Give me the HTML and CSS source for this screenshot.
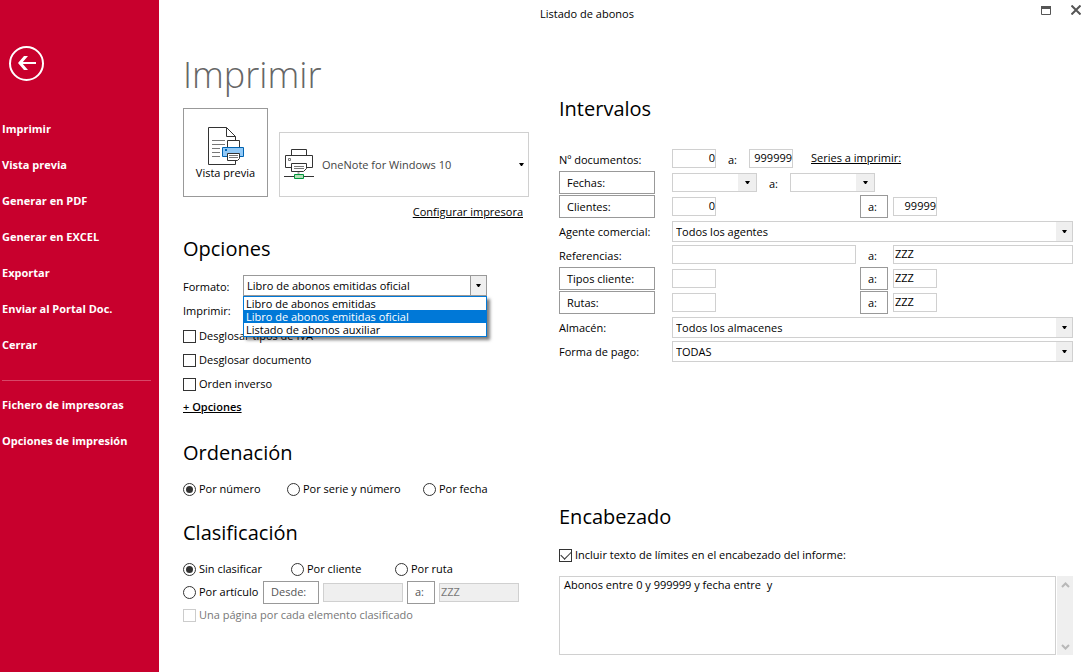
FILE: index.html
```html
<!DOCTYPE html>
<html lang="es">
<head>
<meta charset="utf-8">
<title>Listado de abonos</title>
<link rel="stylesheet" href="styles.css">
</head>
<body>
<aside class="sidebar">
  <button class="back" aria-label="Volver">
    <svg width="35" height="35" viewBox="0 0 35 35" fill="none" stroke="#fff"><circle cx="17.500" cy="17.500" r="16.500" stroke-width="2"/><path d="M11 17H27" stroke-width="2"/><path d="M9 17L15 10H19L13 17L19 24H15Z" fill="#fff" stroke="none"/></svg>
  </button>
  <nav class="menu">
    <a href="#">Imprimir</a>
    <a href="#">Vista previa</a>
    <a href="#">Generar en PDF</a>
    <a href="#">Generar en EXCEL</a>
    <a href="#">Exportar</a>
    <a href="#">Enviar al Portal Doc.</a>
    <a href="#">Cerrar</a>
    <hr>
    <a href="#">Fichero de impresoras</a>
    <a href="#">Opciones de impresión</a>
  </nav>
</aside>
<div class="window">
  <header class="titlebar">
    <span class="caption">Listado de abonos</span>
    <div class="window-buttons">
      <button aria-label="Maximizar"><svg width="10" height="10" viewBox="0 0 10 10"><path d="M.5 1.500H9.500V9.500H.5Z" fill="none" stroke="#555"/><path d="M0 1H10V4H0Z" fill="#555"/></svg></button>
      <button aria-label="Cerrar ventana"><svg width="10" height="10" viewBox="0 0 10 10"><path d="M.5 .5L9.500 9.500M9.500 .5L.5 9.500" stroke="#555" stroke-width="2"/></svg></button>
    </div>
  </header>
  <main class="content">
    <div class="left">
      <h1>Imprimir</h1>
      <div class="printer-row">
        <button class="preview">
          <svg width="36" height="39" viewBox="1 0 36 39" fill="none" stroke="#333">
            <path d="M19.500 .5H1.500V37.500H28.500V33M28.500 13V9.500L19.500 .5V9.500H28.500"/>
            <path d="M5 13.500H18M5 17.500H18M5 21.500H13M5 25.500H13M5 29.500H13" stroke="#777"/>
            <path d="M20.500 20V13.500H32.500V20" fill="#fff"/>
            <path d="M15.500 20.500H36.500V29.500H15.500Z" fill="#91c9f7" stroke="#0063b1"/>
            <path d="M18 22H20V24H18Z" fill="#0063b1" stroke="none"/>
            <path d="M20.500 26.500H32.500V31.500L30.500 33.500H20.500Z" fill="#fff"/>
            <path d="M22 28.500H31M22 30.500H31" stroke="#777"/>
          </svg>
          <span>Vista previa</span>
        </button>
        <div class="printer">
          <select aria-label="Impresora"><option>OneNote for Windows 10</option></select>
          <svg class="printer-icon" width="30" height="30" viewBox="0 0 30 30" fill="none" stroke="#333">
            <path d="M7.500 6V.5H22.500V6M7 18.500H1.500V6.500H28.500V18.500H23"/>
            <path d="M4.500 9.500H6.500V11.500H4.500Z" stroke="#777"/>
            <path d="M7.500 14.500H22.500V19.500L19.500 22.500H7.500Z" fill="#fff"/>
            <path d="M10 17.500H20M10 19.500H20" stroke="#777"/>
            <path d="M14.500 23V25" stroke="#aaa" stroke-width="2"/>
            <path d="M0 27.500H30"/>
            <path d="M10.500 25.500H19.500V29.500H10.500Z" fill="#b3e0b8" stroke="#00963c"/>
          </svg>
          <svg class="arrow" width="5" height="3" viewBox="0 0 5 3"><path d="M0 0H5L3 3H2Z"/></svg>
        </div>
      </div>
      <a class="configure" href="#">Configurar impresora</a>

      <section>
        <h2>Opciones</h2>
        <div class="option-row">
          <label for="formato">Formato:</label>
          <div class="combo format">
            <select id="formato"><option>Libro de abonos emitidas oficial</option></select>
            <span class="drop"><svg width="5" height="3" viewBox="0 0 5 3"><path d="M0 0H5L3 3H2Z"/></svg></span>
            <ul class="options" role="listbox" aria-label="Formato">
              <li role="option">Libro de abonos emitidas</li>
              <li role="option" class="selected" aria-selected="true">Libro de abonos emitidas oficial</li>
              <li role="option">Listado de abonos auxiliar</li>
            </ul>
          </div>
        </div>
        <div class="option-row"><span>Imprimir:</span></div>
        <div class="checks">
          <label class="check"><input type="checkbox">Desglosar tipos de IVA</label>
          <label class="check"><input type="checkbox">Desglosar documento</label>
          <label class="check"><input type="checkbox">Orden inverso</label>
        </div>
        <a class="more" href="#">+ Opciones</a>
      </section>

      <section class="ordering">
        <h2>Ordenación</h2>
        <div class="radios order">
          <label class="check"><input type="radio" name="orden" checked>Por número</label>
          <label class="check"><input type="radio" name="orden">Por serie y número</label>
          <label class="check"><input type="radio" name="orden">Por fecha</label>
        </div>
      </section>

      <section class="classing">
        <h2>Clasificación</h2>
        <div class="radios class">
          <label class="check"><input type="radio" name="clase" checked>Sin clasificar</label>
          <label class="check"><input type="radio" name="clase">Por cliente</label>
          <label class="check"><input type="radio" name="clase">Por ruta</label>
        </div>
        <div class="article">
          <label class="check"><input type="radio" name="clase">Por artículo</label>
          <button class="box from" disabled>Desde:</button>
          <input class="field" type="text" aria-label="Artículo desde" disabled>
          <button class="box to" disabled>a:</button>
          <input class="field" type="text" aria-label="Artículo hasta" value="ZZZ" disabled>
        </div>
        <label class="check off"><input type="checkbox" disabled>Una página por cada elemento clasificado</label>
      </section>
    </div>

    <div class="right">
      <section>
        <h2>Intervalos</h2>
        <div class="ranges">
          <label for="doc1">Nº documentos:</label>
          <div class="inline docs">
            <input class="field num" id="doc1" type="text" value="0">
            <label for="doc2">a:</label>
            <input class="field num" id="doc2" type="text" value="999999">
            <a href="#">Series a imprimir:</a>
          </div>

          <button class="box">Fechas:</button>
          <div class="inline dates">
            <div class="combo date"><select aria-label="Fecha desde"><option></option></select><span class="drop"><svg width="5" height="3" viewBox="0 0 5 3"><path d="M0 0H5L3 3H2Z"/></svg></span></div>
            <label for="fecha2">a:</label>
            <div class="combo date"><select id="fecha2"><option></option></select><span class="drop"><svg width="5" height="3" viewBox="0 0 5 3"><path d="M0 0H5L3 3H2Z"/></svg></span></div>
          </div>

          <button class="box">Clientes:</button>
          <div class="span">
            <input class="field num" type="text" aria-label="Cliente desde" value="0">
            <button class="box to">a:</button>
            <input class="field num" type="text" aria-label="Cliente hasta" value="99999">
          </div>

          <label for="agente">Agente comercial:</label>
          <div class="combo"><select id="agente"><option>Todos los agentes</option></select><span class="drop"><svg width="5" height="3" viewBox="0 0 5 3"><path d="M0 0H5L3 3H2Z"/></svg></span></div>

          <label for="ref1">Referencias:</label>
          <div class="span">
            <input class="field wide" id="ref1" type="text">
            <label class="mid" for="ref2">a:</label>
            <input class="field wide" id="ref2" type="text" value="ZZZ">
          </div>

          <button class="box">Tipos cliente:</button>
          <div class="span">
            <input class="field" type="text" aria-label="Tipo de cliente desde">
            <button class="box to">a:</button>
            <input class="field" type="text" aria-label="Tipo de cliente hasta" value="ZZZ">
          </div>

          <button class="box">Rutas:</button>
          <div class="span">
            <input class="field" type="text" aria-label="Ruta desde">
            <button class="box to">a:</button>
            <input class="field" type="text" aria-label="Ruta hasta" value="ZZZ">
          </div>

          <label for="almacen">Almacén:</label>
          <div class="combo"><select id="almacen"><option>Todos los almacenes</option></select><span class="drop"><svg width="5" height="3" viewBox="0 0 5 3"><path d="M0 0H5L3 3H2Z"/></svg></span></div>

          <label for="pago">Forma de pago:</label>
          <div class="combo"><select id="pago"><option>TODAS</option></select><span class="drop"><svg width="5" height="3" viewBox="0 0 5 3"><path d="M0 0H5L3 3H2Z"/></svg></span></div>
        </div>
      </section>

      <section class="heading">
        <h2>Encabezado</h2>
        <label class="check"><input type="checkbox" checked>Incluir texto de límites en el encabezado del informe:</label>
        <div class="memo">
          <textarea aria-label="Texto del encabezado">Abonos entre 0 y 999999 y fecha entre  y</textarea>
          <div class="scroll">
            <svg width="9" height="6" viewBox="0 0 9 6" fill="none" stroke="#b8b8b8" stroke-width="2"><path d="M1 5L4.500 1.500L8 5"/></svg>
            <svg width="9" height="6" viewBox="0 0 9 6" fill="none" stroke="#b8b8b8" stroke-width="2"><path d="M1 1L4.500 4.500L8 1"/></svg>
          </div>
        </div>
      </section>
    </div>
  </main>
</div>
</body>
</html>
```
FILE: styles.css
```css
* { box-sizing: border-box; }
body {
  margin: 0;
  min-height: 100vh;
  display: flex;
  background: #fff;
  color: #000;
  font: 11px/16px "Open Sans", "Noto Sans", sans-serif;
}
button, input, select, textarea { font: inherit; color: inherit; margin: 0; border-radius: 0; }
a { color: inherit; }
h1, h2 { margin: 0; font-weight: 400; }

.sidebar { width: 159px; flex: none; background: #c8002d; color: #fff; padding-top: 46px; }
.back { display: block; margin-left: 9px; padding: 0; width: 35px; height: 35px; border: 0; background: none; }
.back svg { display: block; }
.menu { display: flex; flex-direction: column; padding: 30px 8px 0 2px; font-weight: 700; }
.menu a { height: 36px; line-height: 36px; text-decoration: none; }
.menu hr { width: 100%; height: 1px; margin: 17px 0 6px; border: 0; background: #d84768; }

.window { flex: 1; min-width: 0; }
.titlebar { display: flex; height: 28px; }
.caption { flex: 1; text-align: center; line-height: 28px; }
.window-buttons { display: flex; align-items: flex-start; justify-content: flex-end; gap: 20px; width: 73px; padding: 5px 7px 0 0; }
.window-buttons button { padding: 0; border: 0; background: none; width: 10px; height: 10px; }
.window-buttons svg { display: block; }

.content { display: grid; grid-template-columns: 346px minmax(0, 1fr); gap: 30px; padding: 0 15px 0 24px; }
.left { padding-top: 22px; }
.right { padding-top: 66px; }
h1 { font-size: 36px; line-height: 50px; font-weight: 300; color: #666; }
h2 { font-size: 20px; line-height: 30px; }

.printer-row { display: flex; align-items: flex-end; gap: 11px; margin-top: 8px; }
.preview { display: flex; flex-direction: column; align-items: center; width: 85px; height: 89px; padding: 18px 0 0; border: 1px solid #999; background: #fff; }
.preview span { margin-top: -1px; }
.printer { position: relative; flex: 1; }
.printer select { appearance: none; display: block; width: 100%; height: 65px; padding: 0 20px 0 42px; border: 1px solid #d0d0d0; background: #fff; color: #444; }
.printer-icon { position: absolute; left: 5px; top: 17px; pointer-events: none; }
.arrow { position: absolute; right: 5px; top: 31px; pointer-events: none; }
.configure { display: block; width: fit-content; margin: 7px 6px 0 auto; }

.left section { margin-top: 14px; }
.option-row { display: grid; grid-template-columns: 60px 244px; align-items: start; height: 24px; line-height: 24px; }
.left h2 + .option-row { margin-top: 11px; }
.checks { margin-top: 1px; }
.check { display: flex; align-items: center; gap: 3px; height: 24px; }
.check input { appearance: none; flex: none; display: grid; place-items: center; width: 13px; height: 13px; border: 1px solid #333; background: #fff; }
.check input[type="radio"] { border-radius: 50%; }
.check input[type="radio"]:checked::before { content: ""; width: 7px; height: 7px; border-radius: 50%; background: #333; }
.check input[type="checkbox"]:checked::before { content: ""; width: 9px; height: 5px; border: solid #333; border-width: 0 0 1px 1px; transform: translateY(-1px) rotate(-45deg); }
.check input:disabled { border-color: #ccc; }
.off { color: #777; }
.more { display: block; width: fit-content; margin-top: 3px; font-weight: 600; }

.left .ordering { margin-top: 23px; }
.radios { display: grid; margin-top: 9px; }
.order { grid-template-columns: 104px 136px 1fr; }
.class { grid-template-columns: 108px 104px 1fr; }
.left .classing { margin-top: 17px; }
.article { display: flex; align-items: center; height: 22px; gap: 4px; }
.article .check { width: 76px; }
.article .box { color: #555; }
.article .field { width: 80px; }
.article .from { width: 56px; }

.combo { position: relative; display: flex; height: 21px; line-height: 16px; }
.combo select { appearance: none; width: 100%; padding: 0 20px 0 3px; border: 1px solid #d0d0d0; background: #fff; }
.combo .drop { position: absolute; inset: 1px 1px 1px auto; width: 16px; display: grid; place-items: center; background: #efefef; pointer-events: none; }
.date { width: 85px; height: 19px; }
.date .drop { width: 18px; }
.format select { border-color: #999; }
.format .drop { border-left: 1px solid #999; }
.options { position: absolute; z-index: 1; top: 21px; left: 0; right: 0; margin: 0; padding: 0; list-style: none; border: 1px solid #0078d7; background: #fff; box-shadow: 3px 3px 3px rgba(0, 0, 0, .5); }
.options li { height: 13px; line-height: 13px; padding-left: 2px; }
.options .selected { background: #0078d7; color: #fff; }

.field { width: 44px; height: 19px; padding: 0 2px 2px 1px; border: 1px solid #d0d0d0; background: #fff; }
.field:disabled { background: #efefef; color: #777; }
.num { text-align: right; padding-right: 0; }
.box { height: 23px; padding: 0 7px; border: 1px solid #999; background: #fff; text-align: left; }
.to { width: 28px; }
.wide { width: 100%; }

.ranges { display: grid; grid-template-columns: 96px minmax(0, 1fr); column-gap: 17px; grid-auto-rows: 24px; align-items: start; margin-top: 23px; }
.ranges label { line-height: 26px; }
.ranges .field, .ranges .combo { margin-top: 2px; }
.inline { display: flex; align-items: flex-start; }
.docs { gap: 12px; }
.docs a { margin-left: 6px; line-height: 22px; }
.dates { gap: 12px; }
.span { display: grid; grid-template-columns: minmax(0, 1fr) 29px 180px; align-items: start; column-gap: 4px; }
.mid { padding-left: 8px; }

.heading { margin-top: 139px; }
.heading .check { margin-top: 11px; }
.memo { display: flex; gap: 1px; margin-top: 9px; }
.memo textarea { flex: 1; height: 79px; padding: 0 4px; border: 1px solid #d0d0d0; resize: none; overflow: hidden; }
.scroll { display: flex; flex-direction: column; justify-content: space-between; align-items: center; width: 16px; padding: 6px 0 5px; background: #efefef; }
```
